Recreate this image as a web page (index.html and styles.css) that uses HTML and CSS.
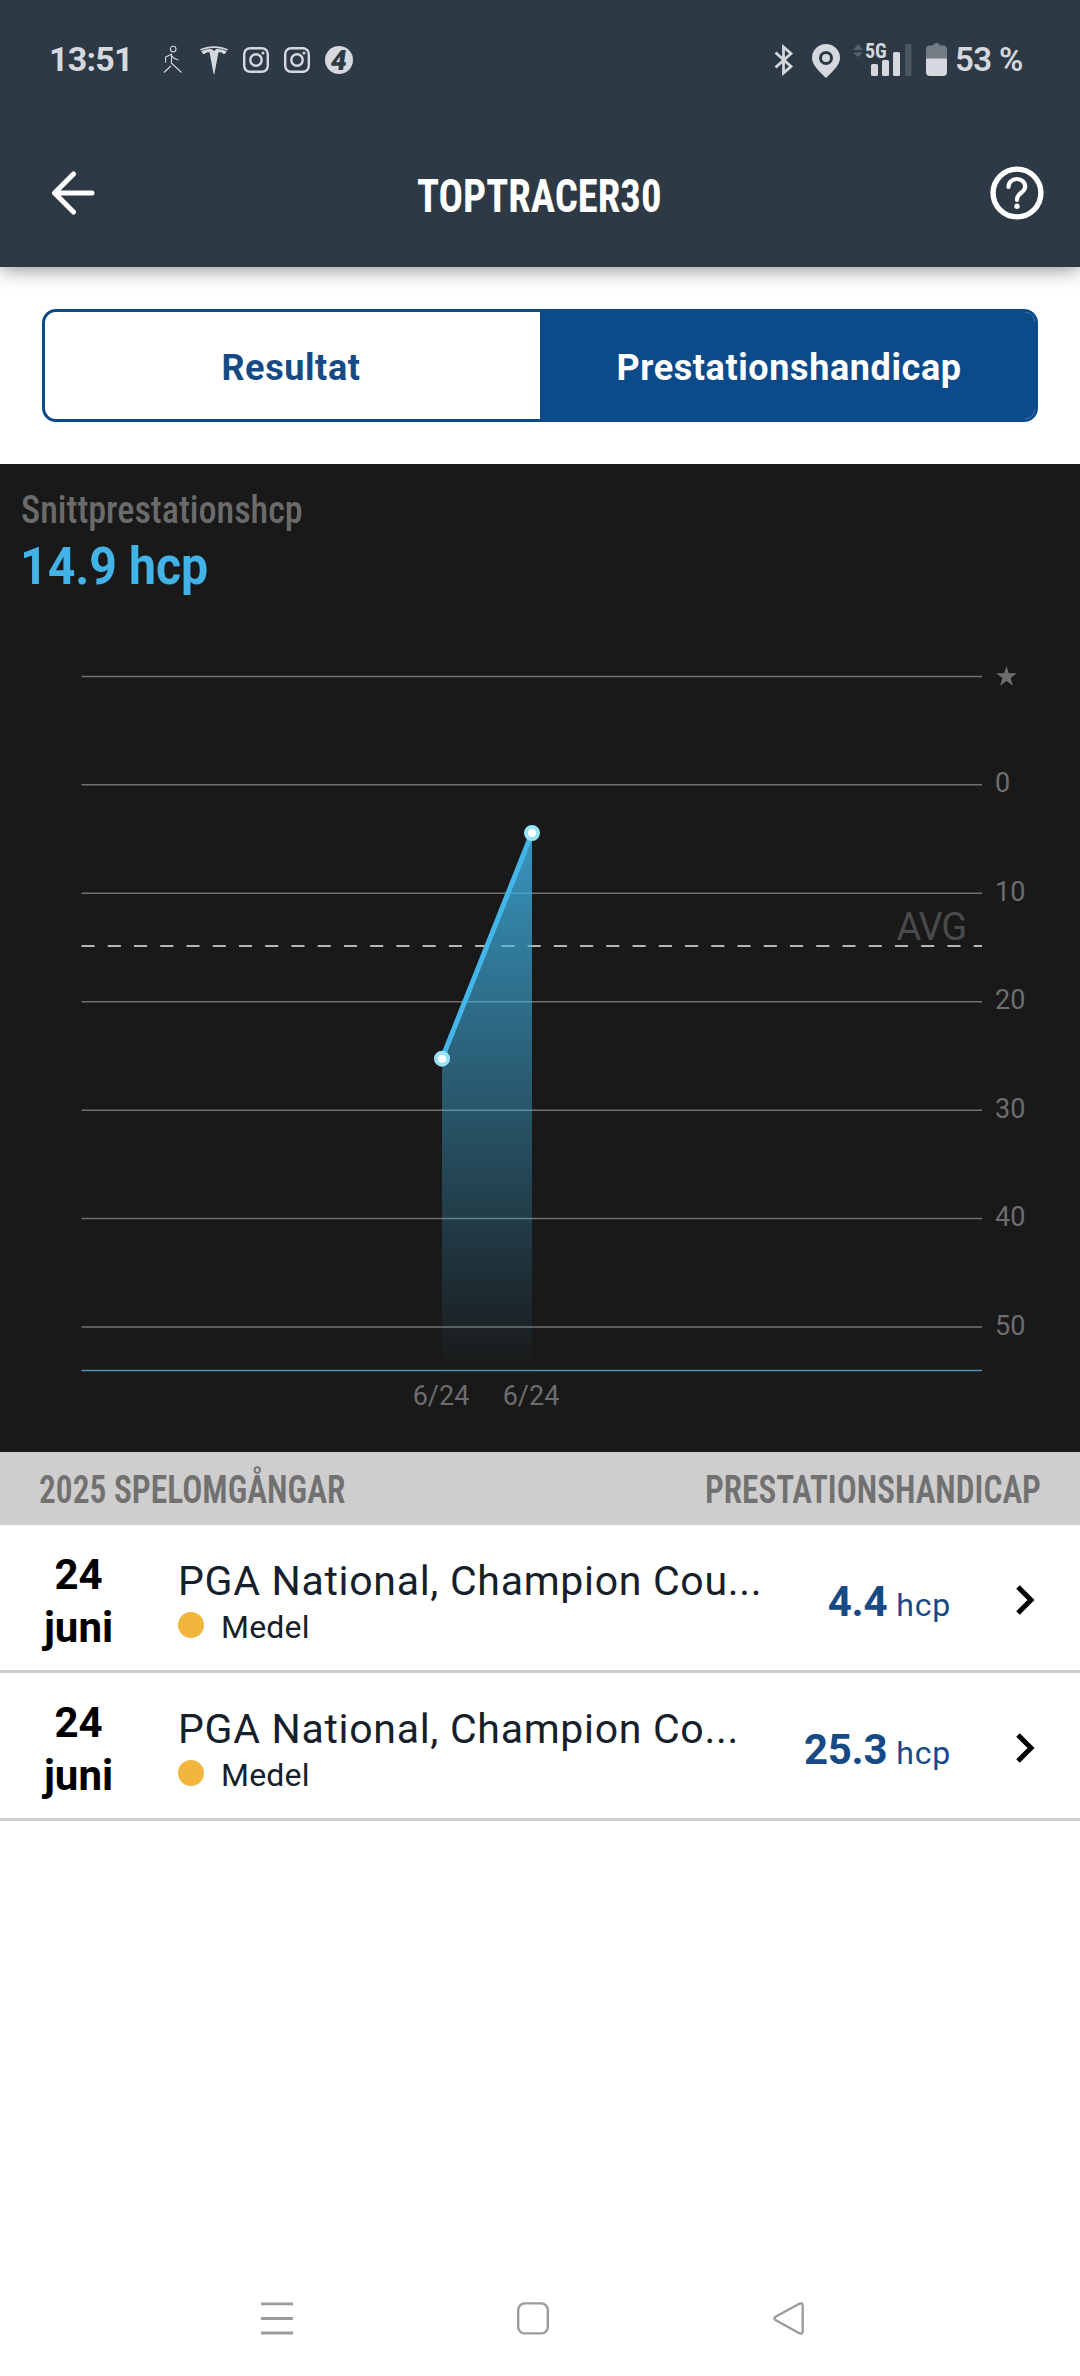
FILE: index.html
```html
<!DOCTYPE html>
<html lang="sv">
<head>
<meta charset="utf-8">
<title>Toptracer30</title>
<link rel="stylesheet" href="styles.css">
</head>
<body>
<div class="top">
  <div class="status">
    <div class="status-left">
      <span class="clock">13:51</span>
      <svg class="walk" width="20" height="30" viewBox="0 0 20 30" fill="none" stroke="#d5d8de" stroke-width="1.1"><circle cx="10.2" cy="4" r="2.8"/><path d="M2.6 17.5V12L8.5 9.2v9L18.5 27.5M8.5 10.5l2.500 2.700 4.500 1.800M7.800 21 1 27.500"/></svg>
      <svg class="tesla" width="28" height="28" viewBox="0 0 28 28" fill="#d5d8de"><path d="M0 3.200C8-.7 20-.7 28 3.200l-.7 1.300C19.500 1 8.500 1 .7 4.500z"/><path d="M1.300 5.300C5 3.400 8 2.800 11.500 2.900L14 5l2.500-2.100c3.500-.1 6.500.5 10.200 2.400-.8 1.900-1.700 2.700-3.200 2.900-.7-1.500-2-2-5-2L14.400 28h-.8L9.500 6.200c-3 0-4.300.5-5 2C3 8 2.100 7.200 1.300 5.300z"/></svg>
      <svg class="insta" width="26" height="26" viewBox="0 0 26 26" fill="none" stroke="#d5d8de" stroke-width="2.400"><rect x="1.200" y="1.200" width="23.600" height="23.600" rx="6"/><circle cx="13" cy="13" r="5.700"/><circle cx="20" cy="6" r="1.500" fill="#d5d8de" stroke="none"/></svg>
      <svg class="insta" width="26" height="26" viewBox="0 0 26 26" fill="none" stroke="#d5d8de" stroke-width="2.400"><rect x="1.200" y="1.200" width="23.600" height="23.600" rx="6"/><circle cx="13" cy="13" r="5.700"/><circle cx="20" cy="6" r="1.500" fill="#d5d8de" stroke="none"/></svg>
      <span class="four"><b>4</b></span>
    </div>
    <div class="status-right">
      <svg class="bt" width="20" height="32" viewBox="0 0 20 32" fill="none" stroke="#d5d8de" stroke-width="2.800"><path d="M1.500 8.500 17 22.500 9.500 29V3L17 9.500 1.500 23.500"/></svg>
      <svg class="pin" width="28" height="34" viewBox="0 0 28 34"><path fill="#d5d8de" fill-rule="evenodd" d="M14 0a14 14 0 0 1 14 14c0 7-7 13-14 20C7 27 0 21 0 14A14 14 0 0 1 14 0zm0 7a7 7 0 1 0 0 14 7 7 0 0 0 0-14z"/><circle cx="14" cy="14" r="4" fill="#d5d8de"/></svg>
      <div class="signal">
        <svg width="60" height="34" viewBox="0 0 60 34"><path fill="#56616c" d="M0 7 5 1l5 6zM0 9.500h10L5 14z"/><g fill="#d5d8de"><rect x="18" y="21" width="7" height="12" rx="1.500"/><rect x="29" y="17" width="7" height="16" rx="1.500"/><rect x="40" y="9" width="7" height="24" rx="1.500"/></g><rect x="52" y="1" width="6.500" height="32" rx="1.500" fill="#4b5763"/></svg>
        <span class="five-g">5G</span>
      </div>
      <svg class="battery" width="21" height="34" viewBox="0 0 21 34"><path fill="#737d86" d="M4 2.500h3Q7.500 0 10.500 0T14 2.500h3q4 0 4 4V16H0V6.500q0-4 4-4z"/><path fill="#d5d8de" d="M0 15.500h21V29q0 4-4 4H4q-4 0-4-4z"/></svg>
      <span class="percent">53 %</span>
    </div>
  </div>
  <div class="header">
    <svg class="back" width="44" height="44" viewBox="0 0 44 44" fill="none" stroke="#fff" stroke-width="5" stroke-linecap="round" stroke-linejoin="round"><path d="M22.500 3 3.500 22l19 19M4 22h37"/></svg>
    <h1>TOPTRACER30</h1>
    <svg class="help" width="54" height="54" viewBox="0 0 54 54" fill="none" stroke="#fff"><circle cx="27" cy="27" r="23.900" stroke-width="5.400"/><path stroke-width="4.200" stroke-linecap="round" d="M18.500 21c0-4.800 3.700-8 8.300-8s8.400 3.200 8.400 7.700c0 5.800-8.200 6.300-8.200 12.300v1"/><circle cx="27" cy="40.300" r="2.700" fill="#fff" stroke="none"/></svg>
  </div>
</div>

<div class="tabs">
  <div class="tab">Resultat</div>
  <div class="tab active">Prestationshandicap</div>
</div>

<section class="panel">
  <div class="panel-label">Snittprestationshcp</div>
  <div class="panel-value">14.9 hcp</div>
  <svg class="chart" width="1080" height="852" viewBox="0 600 1080 852">
    <defs><linearGradient id="area" gradientUnits="userSpaceOnUse" x1="0" y1="833" x2="0" y2="1370"><stop offset="0" stop-color="#3fb4e8" stop-opacity=".8"/><stop offset="1" stop-color="#3fb4e8" stop-opacity="0"/></linearGradient></defs>
    <g stroke="#717171" stroke-width="1.500">
      <path d="M81.500 676.500H982M81.500 784.800H982M81.500 893.300H982M81.500 1001.700H982M81.500 1110.200H982M81.500 1218.500H982M81.500 1327H982"/>
    </g>
    <path d="M81.500 946H982" stroke="#b9b6b0" stroke-width="2" stroke-dasharray="13.120 13.120"/>
    <path d="M442 1058.700 532 833V1370H442z" fill="url(#area)"/>
    <path d="M81.500 1370.500H982" stroke="#4e8fb0" stroke-width="1.600"/>
    <path d="M442 1058.700 532 833" stroke="#43b5e8" stroke-width="5"/>
    <g fill="#fff" stroke="#97e3f8" stroke-width="4"><circle cx="442" cy="1058.700" r="6"/><circle cx="532" cy="833" r="6"/></g>
    <path fill="#6d6d6d" d="m1006.500 666 2.400 7.300h7.900l-6.200 4.700 2.300 7.700-6.400-4.600-6.400 4.600 2.300-7.700-6.200-4.700h7.900z"/>
    <g class="axis">
      <text x="995" y="792">0</text><text x="995" y="901">10</text><text x="995" y="1009">20</text><text x="995" y="1118">30</text><text x="995" y="1226">40</text><text x="995" y="1335">50</text>
      <text x="441" y="1405" text-anchor="middle">6/24</text><text x="531" y="1405" text-anchor="middle">6/24</text>
    </g>
    <text class="avg" x="896.500" y="939.500">AVG</text>
  </svg>
</section>

<div class="list-head"><span class="lh-left">2025 SPELOMGÅNGAR</span><span class="lh-right">PRESTATIONSHANDICAP</span></div>

<div class="row">
  <div class="date"><div>24</div><div>juni</div></div>
  <div class="course"><div class="name">PGA National, Champion Cou...</div><div class="level"><i class="dot"></i>Medel</div></div>
  <div class="score"><b>4.4</b><span>hcp</span></div>
  <svg class="chev" width="20" height="30" viewBox="0 0 20 30" fill="none" stroke="#000" stroke-width="5"><path d="M2 2 15 15 2 28"/></svg>
</div>
<div class="row">
  <div class="date"><div>24</div><div>juni</div></div>
  <div class="course"><div class="name">PGA National, Champion Co...</div><div class="level"><i class="dot"></i>Medel</div></div>
  <div class="score"><b>25.3</b><span>hcp</span></div>
  <svg class="chev" width="20" height="30" viewBox="0 0 20 30" fill="none" stroke="#000" stroke-width="5"><path d="M2 2 15 15 2 28"/></svg>
</div>

<nav class="nav">
  <svg width="32" height="33" viewBox="0 0 32 33" stroke="#9b9b9b" stroke-width="2.800"><path d="M0 1.900h32M0 16.500h32M0 31h32"/></svg>
  <svg width="32" height="33" viewBox="0 0 32 33" fill="none" stroke="#9b9b9b" stroke-width="2.400"><rect x="1.200" y="1.400" width="29.600" height="30" rx="6.500"/></svg>
  <svg width="32" height="33" viewBox="0 0 32 33" fill="none" stroke="#9b9b9b" stroke-width="2.300"><path d="M2.500 14.800 25.800 1.900q3.700-1.800 3.900 1.600v25.800q-.2 3.400-3.900 1.600L2.500 18q-2.200-1.600 0-3.200z"/></svg>
</nav>
</body>
</html>
```
FILE: styles.css
```css
* { box-sizing: border-box; }
body {
  margin: 0;
  min-height: 2376px;
  display: flex;
  flex-direction: column;
  background: #fff;
  font-family: Roboto, "Liberation Sans", sans-serif;
  color: #000;
}
svg { display: block; flex: none; }

.top {
  height: 267px;
  background: #2d3945;
  box-shadow: 0 3px 18px rgba(0, 0, 0, .42);
}
.status {
  height: 119px;
  padding: 0 34px 0 49px;
  display: flex;
  align-items: center;
  justify-content: space-between;
  color: #d5d8de;
}
.status-left, .status-right { display: flex; align-items: center; height: 34px; }
.clock { width: 114px; font-size: 34px; line-height: 32px; font-weight: 700; letter-spacing: -.8px; padding-bottom: 2px; }
.tesla { margin-left: 17px; }
.insta { margin-left: 15px; }
.four {
  width: 28px; height: 28px; margin-left: 15px;
  border-radius: 50%;
  background: #d5d8de; color: #2d3945;
  font-size: 28px; line-height: 30px; text-align: center;
}
.four b { display: block; transform: skewX(-8deg); font-weight: 900; }
.pin { margin: 2px 0 0 18px; }
.signal { position: relative; margin-left: 13px; }
.five-g {
  position: absolute; left: 12px; top: -1px;
  font: 700 20px/19px "Roboto Condensed", Roboto, sans-serif;
}
.battery { margin-left: 13px; }
.percent { width: 99px; padding-left: 8px; font-size: 33px; line-height: 34px; font-weight: 600; letter-spacing: -.6px; white-space: nowrap; }

.header {
  height: 148px;
  padding: 0 36px 0 51px;
  display: flex;
  align-items: center;
  justify-content: space-between;
}
.header h1 {
  margin: 5px 6px 0 0;
  font: 700 46px/54px "Roboto Condensed", Roboto, sans-serif;
  color: #fff;
  transform: scaleX(.885);
}

.tabs {
  height: 113px;
  margin: 42px 42px;
  border: 3px solid #0b4b8a;
  border-radius: 14px;
  display: grid;
  grid-template-columns: 1fr 1fr;
  overflow: hidden;
}
.tab {
  display: flex; align-items: center; justify-content: center;
  padding-top: 4px;
  color: #154a84;
  font-size: 36px; font-weight: 700; letter-spacing: .6px;
}
.tab:first-child { padding-right: 3px; }
.tab.active { padding-left: 3px; background: #0b4b8a; color: #fff; }

.panel {
  height: 988px;
  background: #191919;
  overflow: hidden;
}
.panel-label {
  height: 48px; padding: 22px 0 0 21px;
  font: 500 38px/48px "Roboto Condensed", Roboto, sans-serif;
  color: #6b6b6b;
  transform: scaleX(.95); transform-origin: 21px 0;
}
.panel-value {
  height: 88px; padding: 30px 0 0 20px;
  font-size: 51px; line-height: 50px; font-weight: 700;
  color: #43b2e6;
  transform: scaleX(.945); transform-origin: 20px 0;
}
.axis { font: 27px Roboto, sans-serif; fill: #6d6d6d; }
.avg { font: 38px Roboto, sans-serif; fill: #4a4a4a; letter-spacing: -1.2px; }

.list-head {
  height: 73px;
  padding: 2px 39px 0 39px;
  background: #cecece;
  display: flex; align-items: center; justify-content: space-between;
  font: 600 38px/44px "Roboto Condensed", Roboto, sans-serif;
  color: #717171;
}
.lh-left { transform: scaleX(.88); transform-origin: left; }
.lh-right { transform: scaleX(.875); transform-origin: right; }

.row {
  height: 148px;
  border-bottom: 3px solid #cecece;
  padding-right: 44px;
  display: grid;
  grid-template-columns: 157px 21px 1fr auto 85px;
  color: #16202a;
}
.date {
  padding-top: 23px;
  text-align: center;
  font-size: 42px; line-height: 53px; font-weight: 700;
  color: #000;
}
.course { grid-column: 3; padding-top: 33px; white-space: nowrap; }
.name { font-size: 41px; line-height: 46px; letter-spacing: .7px; }
.level { display: flex; align-items: center; height: 45px; font-size: 32px; letter-spacing: .2px; }
.dot { width: 26px; height: 26px; margin: 0 17px 3px 0; border-radius: 50%; background: #f2b63c; }
.score {
  padding-top: 50px;
  display: flex; align-items: baseline; gap: 9px;
  color: #154a84;
  line-height: 53px;
}
.score b { font-size: 42px; letter-spacing: -.3px; }
.score span { font-size: 32px; letter-spacing: .8px; }
.chev { justify-self: end; margin-top: 60px; }

.nav {
  margin-top: auto;
  height: 116px;
  padding: 0 275px 0 261px;
  display: flex; align-items: center; justify-content: space-between;
}
```
